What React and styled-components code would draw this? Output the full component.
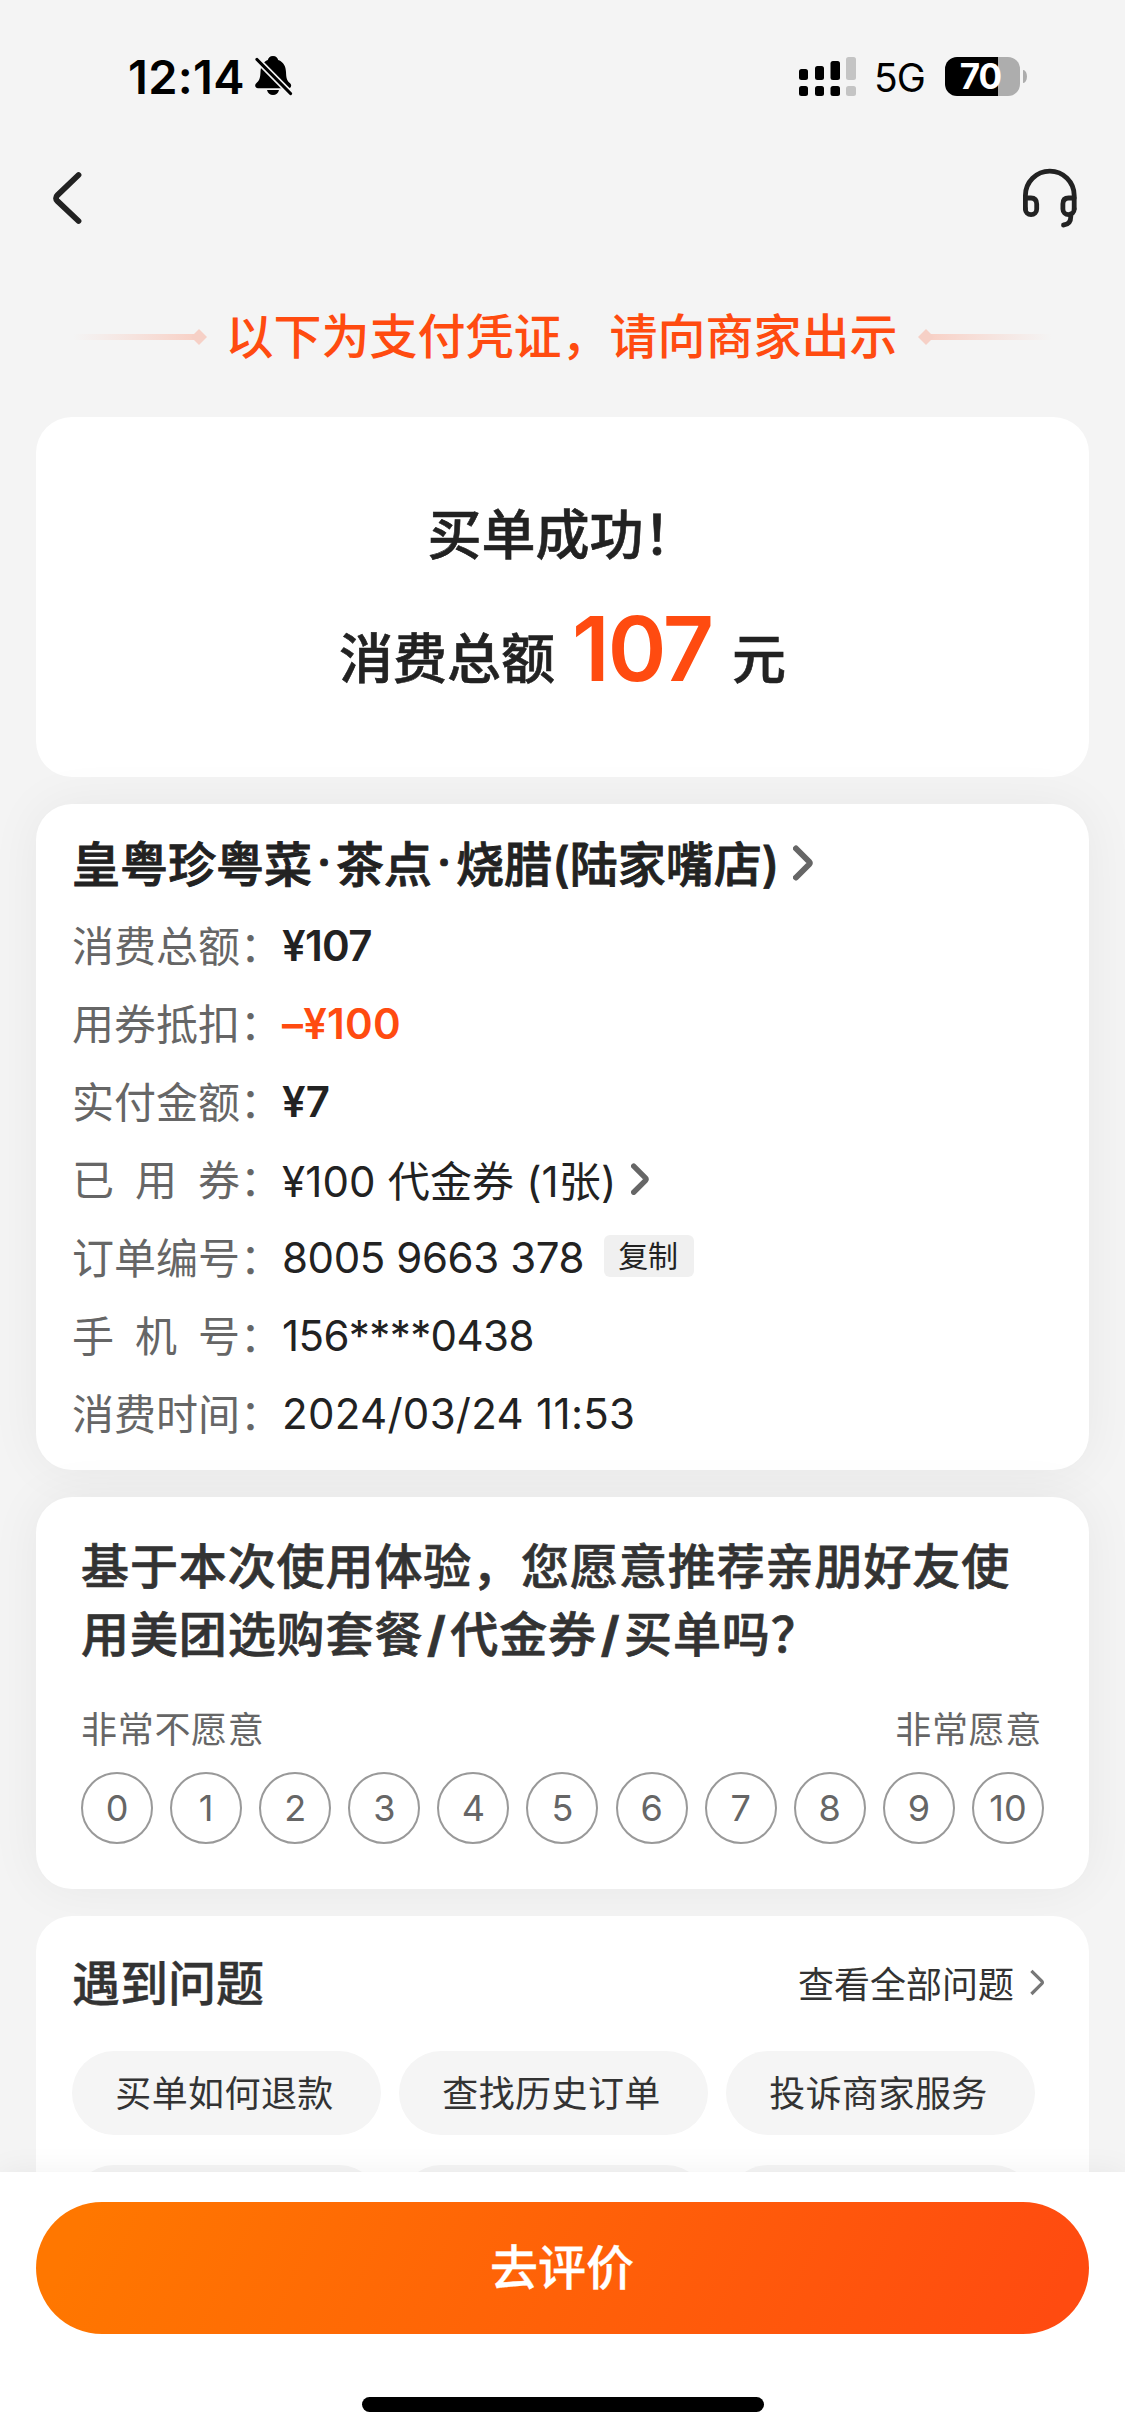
import React from "react";
import styled, { createGlobalStyle } from "styled-components";

const vars = {
  font: `Inter, "Noto Sans CJK SC", sans-serif`,
  page: "#f4f4f4",
  orange: "#ff4b10",
  ink: "#222222",
  dark: "#333333",
  grey: "#666666"
};

const GlobalStyle = createGlobalStyle`
  * {
    box-sizing: border-box;
  }

  body {
    margin: 0;
    background: ${vars.page};
    font-family: ${vars.font};
    color: ${vars.ink};
  }
`;

const Screen = styled.div`
  display: flex;
  flex-direction: column;
  width: 1125px;
  height: 2436px;
  overflow: hidden;
  background: ${vars.page};
`;

const StatusBar = styled.div`
  display: flex;
  flex: none;
  justify-content: space-between;
  align-items: center;
  height: 152px;
  padding: 0 98px 0 128px;
`;

const StatusGroup = styled.div`
  display: flex;
  align-items: center;
`;

const Clock = styled.span`
  width: 127px;
  font-size: 47px;
  font-weight: 600;
  letter-spacing: 0.3px;
  color: #000;
`;

const Network = styled.span`
  width: 50px;
  margin: 2px 21px 0 18px;
  font-size: 39px;
  letter-spacing: -1px;
  color: #000;
`;

const Battery = styled.div`
  display: flex;
  align-items: center;
  justify-content: center;
  width: 75px;
  height: 39px;
  padding-right: 4px;
  border-radius: 12px;
  background: linear-gradient(90deg, #000 70.5%, #adadad 70.5%);
  font-size: 35px;
  font-weight: 700;
  letter-spacing: -1px;
  color: #fff;
`;

const BatteryCap = styled.div`
  width: 4px;
  height: 13px;
  margin-left: 3px;
  border-radius: 0 4px 4px 0 / 0 7px 7px 0;
  background: #adadad;
`;

const NavBar = styled.div`
  display: flex;
  flex: none;
  justify-content: space-between;
  align-items: center;
  height: 92px;
  padding: 0 45px 0 50px;
`;

const Notice = styled.div`
  display: flex;
  flex: none;
  align-items: center;
  justify-content: center;
  height: 186px;
  font-size: 48px;
  font-weight: 500;
  line-height: 72px;
  color: ${vars.orange};
`;

const NoticeArrow = styled.svg`
  flex: none;
  margin: ${props => (props.$flip ? "0 0 0 20px" : "0 18px 0 0")};
  transform: ${props => (props.$flip ? "scaleX(-1)" : "none")};
`;

const Content = styled.main`
  display: flex;
  flex: 1;
  flex-direction: column;
  min-height: 0;
  padding: 0 36px;
  margin-top: -13px;
`;

const Card = styled.section`
  flex: none;
  border-radius: 36px;
  background: #fff;
  box-shadow: ${props =>
    props.$raised ? "0 0 52px rgba(0, 0, 0, 0.056)" : "none"};
`;

const ResultCard = styled(Card)`
  height: 360px;
  margin-bottom: 27px;
  padding-top: 79px;
  font-size: 54px;
  font-weight: 500;
  text-align: center;
  -webkit-text-stroke: 0.6px;
`;

const ResultTitle = styled.div`
  line-height: 80px;
`;

const ResultTotal = styled.div`
  display: flex;
  justify-content: center;
  align-items: baseline;
  margin-top: 17px;
  line-height: 108px;
`;

const TotalNumber = styled.span`
  position: relative;
  top: 2px;
  width: 140px;
  margin: 0 20px 0 17px;
  font-size: 89px;
  font-weight: 600;
  letter-spacing: -2px;
  color: ${vars.orange};
  -webkit-text-stroke: 0;
`;

const OrderCard = styled(Card)`
  height: 666px;
  margin-bottom: 27px;
  padding: 17px 37px 0 36px;
`;

const ShopName = styled.div`
  display: flex;
  align-items: center;
  height: 80px;
  margin-bottom: 5px;
  font-size: 48px;
  font-weight: 500;
  white-space: nowrap;
  -webkit-text-stroke: 0.9px;
`;

const ShopDot = styled.span`
  width: 24px;
  text-align: center;
`;

const OrderRow = styled.div`
  display: flex;
  align-items: center;
  height: 78px;
  font-size: 42px;
`;

const OrderLabel = styled.div`
  display: flex;
  justify-content: space-between;
  width: 168px;
  margin-top: -3px;
  color: ${vars.grey};
`;

const Colon = styled.span`
  width: 42px;
  margin-top: -3px;
  color: ${vars.grey};
`;

const OrderValue = styled.div`
  margin-top: ${props => props.$top || 0}px;
  color: ${props => (props.$orange ? vars.orange : vars.ink)};
  font-weight: ${props => (props.$strong ? 600 : 400)};
  letter-spacing: ${props => props.$spacing || 0}px;
  white-space: pre;
`;

const CopyButton = styled.button`
  width: 90px;
  height: 42px;
  margin: -2px 0 0 20px;
  padding: 0 2px 0 0;
  border: 0;
  border-radius: 6px;
  background: #f0f0f0;
  font-family: inherit;
  font-size: 30px;
  line-height: 40px;
  color: ${vars.ink};
`;

const SurveyCard = styled(Card)`
  height: 392px;
  margin-bottom: 27px;
  padding: 36px 46px 0 45px;
`;

const SurveyTitle = styled.div`
  font-size: 48px;
  font-weight: 500;
  letter-spacing: 0.9px;
  line-height: 68px;
  color: ${vars.dark};
  white-space: nowrap;
  -webkit-text-stroke: 0.7px;
`;

const SurveySlash = styled.span`
  display: inline-block;
  width: 27px;
  font-weight: 700;
  text-align: center;
`;

const SurveyEnds = styled.div`
  display: flex;
  justify-content: space-between;
  margin-top: 34px;
  padding-right: 1px;
  font-size: 36px;
  letter-spacing: 0.7px;
  line-height: 54px;
  color: ${vars.grey};
`;

const Scores = styled.div`
  display: flex;
  justify-content: space-between;
  margin: 15px -1px 0 0;
`;

const Score = styled.div`
  display: flex;
  justify-content: center;
  align-items: center;
  width: 72px;
  height: 72px;
  border: 2px solid #999;
  border-radius: 50%;
  font-size: 36px;
  color: ${vars.grey};
`;

const HelpCard = styled(Card)`
  height: 400px;
  padding: 37px 36px 0;
`;

const HelpHeader = styled.div`
  display: flex;
  justify-content: space-between;
  align-items: center;
  height: 60px;
  padding: 0 8px 0 0;
  color: ${vars.dark};
`;

const HelpTitle = styled.div`
  margin-top: -7px;
  font-size: 48px;
  font-weight: 500;
  -webkit-text-stroke: 0.4px;
`;

const HelpLink = styled.div`
  display: flex;
  align-items: center;
  gap: 15px;
  margin-top: -2px;
  font-size: 36px;
`;

const Chips = styled.div`
  display: grid;
  grid-template-columns: repeat(3, 309px);
  gap: 30px 18px;
  margin-top: 38px;
`;

const Chip = styled.div`
  height: 84px;
  padding-right: 4px;
  border-radius: 42px;
  background: #f5f5f5;
  font-size: 36px;
  letter-spacing: 0.4px;
  line-height: 86px;
  text-align: center;
  color: ${vars.dark};
`;

const Footer = styled.footer`
  display: flex;
  flex: none;
  flex-direction: column;
  align-items: center;
  position: relative;
  height: 264px;
  padding: 30px 36px 0;
  background: #fff;
  box-shadow: 0 0 30px rgba(0, 0, 0, 0.06);
`;

const ReviewButton = styled.button`
  width: 100%;
  height: 132px;
  padding: 0 1px 8px 0;
  border: 0;
  border-radius: 66px;
  background: linear-gradient(115deg, #ff7700 5%, #ff4b10 96%);
  font-family: inherit;
  font-size: 48px;
  font-weight: 500;
  color: #fff;
  -webkit-text-stroke: 0.3px;
`;

const HomeIndicator = styled.div`
  width: 402px;
  height: 15px;
  margin-top: 63px;
  border-radius: 8px;
  background: #000;
`;

const MutedBell = () =>
  <svg width="38" height="42" viewBox="0 0 38 42">
    <path d="M18 1c3.2 0 4.6 1.8 5.2 4c5.5 2 7.6 6.5 7.8 12c.2 6 1 8.5 3.2 10.5c1.8 1.6 2.3 2.6 1.8 4c-.4 1.2-1 1.7-2.5 1.7H3c-1.7 0-2.6-1-2.8-2.2c-.2-1.5.6-2.4 2-3.7c2.4-2.3 3.1-5 3.3-10.3c.2-5.5 2.3-10 7.3-12c.6-2.2 2-4 5.2-4z" />
    <path d="M12 35h12c-.8 3.2-3 5-6 5s-5.2-1.8-6-5z" />
    <path d="M-2 .5L39 42" stroke={vars.page} strokeWidth="6.4" />
    <path d="M2 4.5L35.5 38.5" stroke="#000" strokeWidth="3.2" strokeLinecap="round" />
  </svg>;

const Signal = () =>
  <svg width="57" height="39" viewBox="0 0 57 39">
    <rect x="0" y="12" width="9" height="11" rx="2.5" />
    <rect x="0" y="29" width="9" height="10" rx="2.5" />
    <rect x="16" y="9" width="9" height="14" rx="2.5" />
    <rect x="16" y="29" width="9" height="10" rx="2.5" />
    <rect x="31.5" y="4" width="9.5" height="19" rx="2.5" />
    <rect x="31.5" y="29" width="9.5" height="10" rx="2.5" />
    <rect x="47" y="0" width="10" height="23" rx="2.5" fill="#c4c4c4" />
    <rect x="47" y="29" width="10" height="10" rx="2.5" fill="#c4c4c4" />
  </svg>;

const BackIcon = () =>
  <svg width="34" height="56" viewBox="0 0 34 56" fill="none" stroke={vars.ink} strokeWidth="5.8" strokeLinecap="round">
    <path d="M28.5 5L7.5 25.2Q4.5 28.1 7.5 31.2L28.5 51" />
  </svg>;

const HeadsetIcon = () =>
  <svg width="60" height="64" viewBox="0 0 60 64" fill="none" stroke={vars.ink} strokeWidth="4.8" strokeLinecap="round">
    <path d="M5.4 43V29.5a24.4 24.4 0 0 1 48.8 0V43" />
    <path d="M5.4 32H11q5.7 0 5.7 6v5a5.65 5.65 0 0 1-11.3 0" />
    <path d="M54.2 32H48.6q-5.7 0-5.7 6v5a5.65 5.65 0 0 0 11.3 0" />
    <path d="M50.8 48v2.5q0 8-7.3 8.5" />
  </svg>;

const Arrow = ({ flip }) =>
  <NoticeArrow $flip={flip} width="134" height="18" viewBox="0 0 134 18">
    <defs>
      <linearGradient id={flip ? "fadeRight" : "fadeLeft"}>
        <stop offset="0" stopColor="#f8d3c9" stopOpacity="0" />
        <stop offset="1" stopColor="#f8d0c5" />
      </linearGradient>
    </defs>
    <rect x="0" y="6" width="124" height="6" fill={`url(#${flip ? "fadeRight" : "fadeLeft"})`} />
    <path d="M118 9l8-8 8 8-8 8z" fill="#f6d0c6" />
  </NoticeArrow>;

const ArrowIcon = styled.svg.attrs({ viewBox: "0 0 20 36", fill: "none" })`
  flex: none;
  width: ${props => props.$w}px;
  height: ${props => props.$w * 1.8}px;
  margin-top: ${props => props.$top || 0}px;
  margin-left: ${props => props.$gap || 0}px;
  stroke: ${props => props.$color || vars.grey};
  stroke-width: ${props => props.$weight || 6};
  stroke-linecap: ${props => props.$cap || "round"};
`;

const Chevron = props =>
  <ArrowIcon {...props}>
    <path d="M3 3.5L16 16.5Q17.4 18 16 19.5L3 32.5" />
  </ArrowIcon>;

const orderRows = [
  { label: "消费总额", value: "¥107", strong: true, spacing: -0.7 },
  { label: "用券抵扣", value: "–¥100", strong: true, orange: true, spacing: 0.2 },
  { label: "实付金额", value: "¥7", strong: true },
  { label: "已用券", value: "¥100 代金券 (1张)", link: true, spacing: 0.15, top: -2 },
  { label: "订单编号", value: "8005 9663 378", copy: true, spacing: -0.4 },
  { label: "手机号", value: "156****0438", spacing: -0.6 },
  { label: "消费时间", value: "2024/03/24 11:53", spacing: 0.3 }
];

const scores = [0, 1, 2, 3, 4, 5, 6, 7, 8, 9, 10];

const questions = ["买单如何退款", "查找历史订单", "投诉商家服务", "", "", ""];

const App = () =>
  <Screen>
    <GlobalStyle />
    <StatusBar>
      <StatusGroup>
        <Clock>12:14</Clock>
        <MutedBell />
      </StatusGroup>
      <StatusGroup>
        <Signal />
        <Network>5G</Network>
        <Battery>70</Battery>
        <BatteryCap />
      </StatusGroup>
    </StatusBar>
    <NavBar>
      <BackIcon />
      <HeadsetIcon />
    </NavBar>
    <Notice>
      <Arrow />
      以下为支付凭证，请向商家出示
      <Arrow flip />
    </Notice>
    <Content>
      <ResultCard>
        <ResultTitle>买单成功！</ResultTitle>
        <ResultTotal>
          消费总额<TotalNumber>107</TotalNumber>元
        </ResultTotal>
      </ResultCard>
      <OrderCard $raised>
        <ShopName>
          皇粤珍粤菜<ShopDot>·</ShopDot>茶点<ShopDot>·</ShopDot>烧腊(陆家嘴店)
          <Chevron $w={20} $gap={14} $top={3} />
        </ShopName>
        {orderRows.map(row =>
          <OrderRow key={row.label}>
            <OrderLabel>
              {row.label.split("").map(char => <span key={char}>{char}</span>)}
            </OrderLabel>
            <Colon>：</Colon>
            <OrderValue
              $strong={row.strong}
              $orange={row.orange}
              $spacing={row.spacing}
              $top={row.top}
            >
              {row.value}
            </OrderValue>
            {row.link && <Chevron $w={18} $gap={15} />}
            {row.copy && <CopyButton>复制</CopyButton>}
          </OrderRow>
        )}
      </OrderCard>
      <SurveyCard $raised>
        <SurveyTitle>
          基于本次使用体验，您愿意推荐亲朋好友使
          <br />
          用美团选购套餐<SurveySlash>/</SurveySlash>代金券<SurveySlash>/</SurveySlash>买单吗？
        </SurveyTitle>
        <SurveyEnds>
          <span>非常不愿意</span>
          <span>非常愿意</span>
        </SurveyEnds>
        <Scores>
          {scores.map(score => <Score key={score}>{score}</Score>)}
        </Scores>
      </SurveyCard>
      <HelpCard>
        <HelpHeader>
          <HelpTitle>遇到问题</HelpTitle>
          <HelpLink>
            查看全部问题
            <Chevron $w={16} $weight={4} $cap="butt" $color="#777" />
          </HelpLink>
        </HelpHeader>
        <Chips>
          {questions.map((question, i) => <Chip key={i}>{question}</Chip>)}
        </Chips>
      </HelpCard>
    </Content>
    <Footer>
      <ReviewButton>去评价</ReviewButton>
      <HomeIndicator />
    </Footer>
  </Screen>;

export default App;
